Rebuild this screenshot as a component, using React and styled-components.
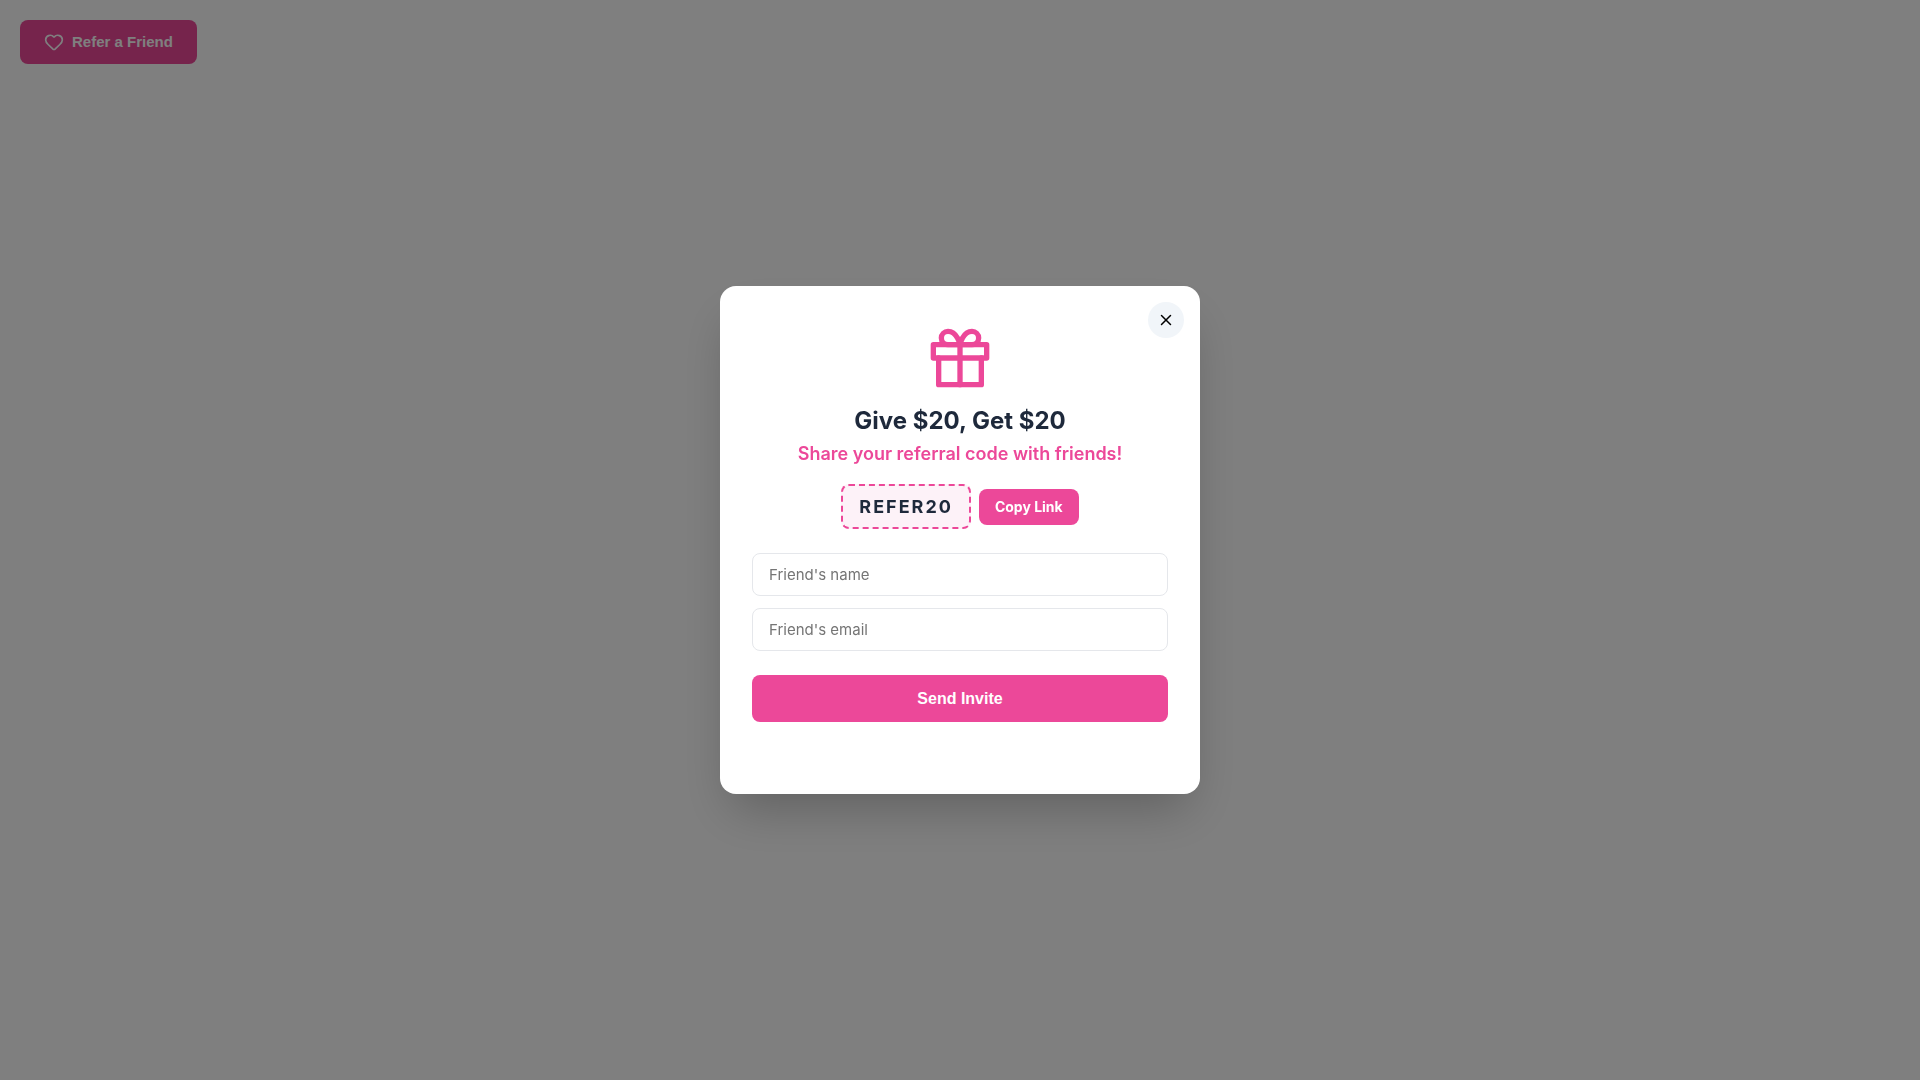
import React, { useState } from 'react';
import styled, { createGlobalStyle } from 'styled-components';
import { Heart } from 'lucide-react';
import { FiGift, FiX } from 'react-icons/fi';

const GlobalStyle = createGlobalStyle`
  * {
    box-sizing: border-box;
  }

  body {
    margin: 0;
    background: #fff;
    font-family: Inter, 'Liberation Sans', sans-serif;
  }
`;

const Page = styled.main`
  min-height: 100vh;
  padding: 20px;
`;

const Button = styled.button`
  display: inline-flex;
  align-items: center;
  justify-content: center;
  gap: 8px;
  border: none;
  border-radius: 8px;
  background: #ec4899;
  color: #fff;
  font-weight: 600;
  cursor: pointer;

  &:hover {
    background: #db2777;
  }
`;

const TriggerButton = styled(Button)`
  padding: 12px 24px;
  font-family: 'Liberation Sans', Arial, sans-serif;
  font-size: 15px;
  line-height: 20px;
`;

const Overlay = styled.div`
  position: fixed;
  inset: 0;
  display: flex;
  align-items: center;
  justify-content: center;
  padding: 20px;
  background: rgba(0, 0, 0, 0.5);
`;

const Modal = styled.div`
  position: relative;
  width: 100%;
  max-width: 480px;
  padding: 40px 32px 32px;
  border-radius: 16px;
  background: #fff;
  box-shadow: 0 25px 50px -12px rgba(0, 0, 0, 0.25);
  text-align: center;
`;

const CloseButton = styled.button`
  position: absolute;
  top: 16px;
  right: 16px;
  display: flex;
  align-items: center;
  justify-content: center;
  width: 36px;
  height: 36px;
  padding: 0;
  border: none;
  border-radius: 50%;
  background: #f1f5f9;
  color: #000;
  cursor: pointer;
`;

const GiftIcon = styled(FiGift)`
  display: block;
  margin: 0 auto 16px;
  color: #ec4899;
`;

const Title = styled.h2`
  margin: 0 0 8px;
  color: #1e293b;
  font-size: 24px;
  font-weight: 700;
  line-height: 30px;
`;

const Subtitle = styled.p`
  margin: 0 0 20px;
  color: #ec4899;
  font-size: 18px;
  font-weight: 600;
  line-height: 20px;
`;

const CodeRow = styled.div`
  display: flex;
  align-items: center;
  justify-content: center;
  gap: 8px;
  margin-bottom: 24px;
`;

const Code = styled.code`
  padding: 10px 16px;
  border: 2px dashed #ec4899;
  border-radius: 8px;
  background: #fdf2f8;
  color: #1e293b;
  font-family: inherit;
  font-size: 18px;
  font-weight: 700;
  letter-spacing: 2px;
  line-height: 21px;
`;

const CopyButton = styled(Button)`
  padding: 8px 16px;
  font-family: inherit;
  font-size: 14px;
  font-weight: 700;
  line-height: 20px;
`;

const Form = styled.form`
  display: flex;
  flex-direction: column;
  gap: 12px;
`;

const Input = styled.input`
  width: 100%;
  height: 43px;
  padding: 12px 16px;
  border: 1px solid #e5e7eb;
  border-radius: 8px;
  font-family: inherit;
  font-size: 15px;

  &::placeholder {
    color: #757575;
  }

  &:focus {
    outline: none;
    border-color: #ec4899;
  }
`;

const SubmitButton = styled(Button)`
  width: 100%;
  margin-top: 12px;
  padding: 14px;
  font-family: 'Liberation Sans', Arial, sans-serif;
  font-size: 16px;
  line-height: 19px;
`;

const Status = styled.p`
  min-height: 24px;
  margin: 16px 0 0;
  color: #10b981;
  font-size: 14px;
  line-height: 24px;
`;

const REFERRAL_CODE = 'REFER20';

const ReferralModal = ({ onClose }) => {
  const [name, setName] = useState('');
  const [email, setEmail] = useState('');
  const [status, setStatus] = useState('');

  const handleCopy = () => {
    navigator.clipboard?.writeText(REFERRAL_CODE);
    setStatus('Link copied!');
  };

  const handleSubmit = (e) => {
    e.preventDefault();
    setStatus(`Invite sent to ${name}!`);
    setName('');
    setEmail('');
  };

  return (
    <Overlay>
      <Modal role="dialog" aria-modal="true" aria-labelledby="referral-title">
        <CloseButton type="button" aria-label="Close" onClick={onClose}>
          <FiX size={18} />
        </CloseButton>
        <GiftIcon size={64} aria-hidden="true" />
        <Title id="referral-title">Give $20, Get $20</Title>
        <Subtitle>Share your referral code with friends!</Subtitle>
        <CodeRow>
          <Code>{REFERRAL_CODE}</Code>
          <CopyButton type="button" onClick={handleCopy}>Copy Link</CopyButton>
        </CodeRow>
        <Form onSubmit={handleSubmit}>
          <Input
            type="text"
            aria-label="Friend's name"
            placeholder="Friend's name"
            value={name}
            onChange={(e) => setName(e.target.value)}
            required
          />
          <Input
            type="email"
            aria-label="Friend's email"
            placeholder="Friend's email"
            value={email}
            onChange={(e) => setEmail(e.target.value)}
            required
          />
          <SubmitButton type="submit">Send Invite</SubmitButton>
        </Form>
        <Status role="status">{status}</Status>
      </Modal>
    </Overlay>
  );
};

const App = () => {
  const [open, setOpen] = useState(true);

  return (
    <>
      <GlobalStyle />
      <Page>
        <TriggerButton type="button" onClick={() => setOpen(true)}>
          <Heart size={20} aria-hidden="true" />
          Refer a Friend
        </TriggerButton>
      </Page>
      {open && <ReferralModal onClose={() => setOpen(false)} />}
    </>
  );
};

export default App;
